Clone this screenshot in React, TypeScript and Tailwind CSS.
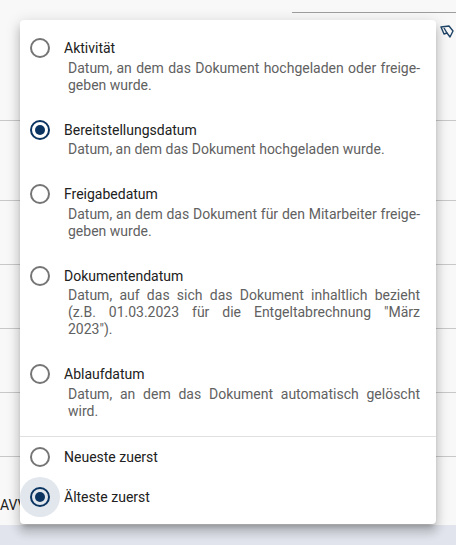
import React from "react";

function Radio({ checked, halo }: { checked?: boolean; halo?: boolean }) {
  return (
    <span className="relative flex h-5 w-5 shrink-0 items-center justify-center">
      {halo && <span className="absolute -inset-[10px] rounded-full bg-[#e2e7ee]" />}
      <span
        className={
          checked
            ? "relative flex h-5 w-5 items-center justify-center rounded-full border-2 border-[#0b3560]"
            : "relative flex h-5 w-5 items-center justify-center rounded-full border-2 border-[#757575]"
        }
      >
        {checked && <span className="h-[10px] w-[10px] rounded-full bg-[#0b3560]" />}
      </span>
    </span>
  );
}

function Option({ label, desc, checked }: { label: string; desc: string; checked?: boolean }) {
  return (
    <div className="flex items-start gap-[14px] py-[13px] pl-[10px] pr-4">
      <Radio checked={checked} />
      <div className="min-w-0 flex-1">
        <div className="text-[14px] leading-[20px] text-[#212121]">{label}</div>
        <p className="ml-[4px] mt-[1.5px] text-justify text-[14px] leading-[17px] text-[#616161]">{desc}</p>
      </div>
    </div>
  );
}

function SortOption({ label, checked, halo }: { label: string; checked?: boolean; halo?: boolean }) {
  return (
    <div className="flex items-center gap-[14px] py-[10px] pl-[10px] pr-4">
      <Radio checked={checked} halo={halo} />
      <div className="relative text-[14px] leading-[20px] text-[#212121]">{label}</div>
    </div>
  );
}

export default function App() {
  return (
    <div lang="de" className="relative flex h-[545px] w-[456px] flex-col overflow-hidden bg-[#f8f8f8] font-['Roboto',sans-serif]">
      {/* background page */}
      <div className="flex h-[13px] justify-end">
        <div className="w-[164px] border-b border-[#9e9e9e]" />
      </div>
      <div className="flex h-[108px] justify-end border-b border-[#c8c8c8] pr-[2px] pt-[12px]">
        <svg width="14" height="14" viewBox="0 0 14 14" fill="none" stroke="#1f4466" strokeWidth="1.4" strokeLinejoin="round">
          <path d="M1 2 L9 1 L13 6 L10 12 L7 8 L4 9 Z" />
          <path d="M4 3 L7 8" />
        </svg>
      </div>
      <div className="h-[80px] border-b border-[#c8c8c8]" />
      <div className="h-[64px] border-b border-[#c8c8c8]" />
      <div className="h-[64px] border-b border-[#c8c8c8]" />
      <div className="h-[64px] border-b border-[#c8c8c8]" />
      <div className="h-[64px] border-b border-[#c8c8c8]" />
      <div className="flex-1 pt-[38px] text-[14px] leading-[20px] text-[#212121]">AVV</div>
      <div className="h-[20px] bg-[#e1e4ec]" />

      {/* menu overlay */}
      <div className="absolute left-[20px] top-[20px] w-[416px] rounded-[4px] bg-white pb-[7px] pt-[5px] shadow-[0_5px_5px_-3px_rgba(0,0,0,0.2),0_8px_10px_1px_rgba(0,0,0,0.14),0_3px_14px_2px_rgba(0,0,0,0.12)]">
        <Option label="Aktivität" desc={"Datum, an dem das Dokument hochgeladen oder freige\u00ADgeben wurde."} />
        <Option label="Bereitstellungsdatum" desc="Datum, an dem das Dokument hochgeladen wurde." checked />
        <Option label="Freigabedatum" desc={"Datum, an dem das Dokument für den Mitarbeiter freige\u00ADgeben wurde."} />
        <Option
          label="Dokumentendatum"
          desc={'Datum, auf das sich das Dokument inhaltlich bezieht (z.B. 01.03.2023 für die Entgeltabrechnung "März 2023").'}
        />
        <Option label="Ablaufdatum" desc="Datum, an dem das Dokument automatisch gelöscht wird." />
        <div className="mt-[3px] border-t border-[#e0e0e0]" />
        <SortOption label="Neueste zuerst" />
        <SortOption label="Älteste zuerst" checked halo />
      </div>
    </div>
  );
}
